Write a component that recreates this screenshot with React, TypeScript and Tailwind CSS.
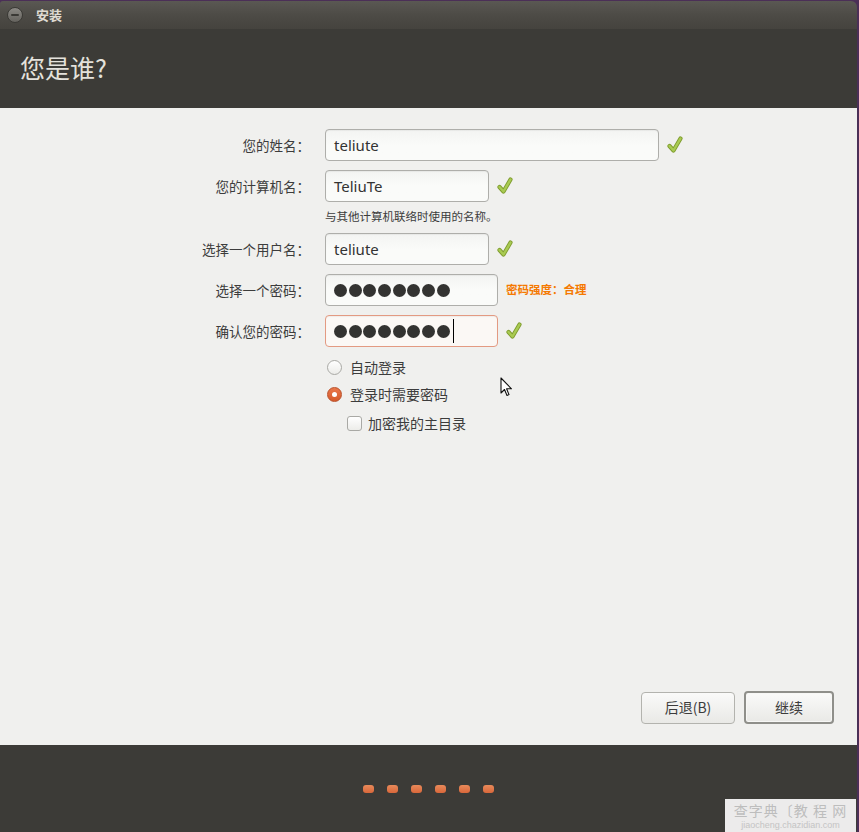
import React from 'react';

const CJK = '"Noto Sans CJK SC", "Noto Sans", sans-serif';

function Check() {
  return (
    <svg width="16" height="18" viewBox="0 0 16 18" className="ml-[8px] shrink-0">
      <path d="M2.5 10 L6.5 14.5 L13.5 2.5" fill="none" stroke="#7f9c2e" strokeWidth="4.2" strokeLinecap="round" strokeLinejoin="round" />
      <path d="M2.5 10 L6.5 14.5 L13.5 2.5" fill="none" stroke="#a9cb52" strokeWidth="2.4" strokeLinecap="round" strokeLinejoin="round" />
    </svg>
  );
}

function Field({ width, children, accent }: { width: string; children: React.ReactNode; accent?: boolean }) {
  return (
    <div
      className={`${width} h-[32px] rounded-[4px] border flex items-center pl-[8px] ${
        accent ? 'border-[#e39a82] bg-[#fbf8f5]' : 'border-[#aeaeaa] bg-gradient-to-b from-[#f3f4f2] via-[#fafbf9] to-[#fafbf9]'
      } shadow-[inset_0_1px_1px_rgba(0,0,0,0.05)]`}
    >
      {children}
    </div>
  );
}

function Row({ label, children, top }: { label: string; children: React.ReactNode; top: string }) {
  return (
    <div className={`flex items-center ${top}`}>
      <div className="w-[310px] text-right text-[13.5px] text-[#3c3c3c]">{label}</div>
      <div className="ml-[15px] flex items-center">{children}</div>
    </div>
  );
}

function Dots({ caret }: { caret?: boolean }) {
  return (
    <div className="flex items-center gap-[1.7px]">
      {Array.from({ length: 8 }).map((_, i) => (
        <span key={i} className="w-[13px] h-[13px] rounded-full bg-[#333331]" />
      ))}
      {caret && <span className="ml-[1px] w-[1px] h-[24px] bg-black" />}
    </div>
  );
}

export default function App() {
  return (
    <div className="w-[859px] h-[832px] bg-[#4b2f57] pt-[1px] pr-[2px] relative overflow-hidden" style={{ fontFamily: CJK }}>
      <div className="w-full h-full flex flex-col">
        {/* title bar */}
        <div className="h-[28px] rounded-tr-[6px] rounded-tl-[3px] bg-gradient-to-b from-[#5a5853] via-[#4d4b46] to-[#45433e] flex items-center">
          <div className="ml-[7px] w-[16px] h-[16px] rounded-full bg-gradient-to-b from-[#8b8984] to-[#65635e] border border-[#3a3935] flex items-center justify-center">
            <span className="w-[8px] h-[2px] bg-[#3a3935] rounded-sm" />
          </div>
          <span className="ml-[13px] text-[13px] font-bold text-[#dfdbd2]">安装</span>
        </div>

        {/* header */}
        <div className="h-[79px] bg-[#3c3b37] flex items-center pl-[20px]">
          <span className="text-[25px] text-[#e4e2dc] leading-none -mt-[2px]">您是谁?</span>
        </div>

        {/* body */}
        <div className="flex-1 bg-[#f0f0ee] flex flex-col pt-[21px] pb-[21px] pr-[23px]">
          <Row label="您的姓名：" top="">
            <Field width="w-[334px]">
              <span className="text-[15px] text-[#333]" style={{ fontFamily: '"Noto Sans", sans-serif' }}>teliute</span>
            </Field>
            <Check />
          </Row>
          <Row label="您的计算机名：" top="mt-[9px]">
            <Field width="w-[164px]">
              <span className="text-[15px] text-[#333]" style={{ fontFamily: '"Noto Sans", sans-serif' }}>TeliuTe</span>
            </Field>
            <Check />
          </Row>
          <div className="ml-[325px] mt-[5px] text-[11.5px] text-[#3c3c3c] leading-[18px]">与其他计算机联络时使用的名称。</div>
          <Row label="选择一个用户名：" top="mt-[8px]">
            <Field width="w-[164px]">
              <span className="text-[15px] text-[#333]" style={{ fontFamily: '"Noto Sans", sans-serif' }}>teliute</span>
            </Field>
            <Check />
          </Row>
          <Row label="选择一个密码：" top="mt-[9px]">
            <Field width="w-[173px]">
              <Dots />
            </Field>
            <span className="ml-[8px] text-[11.5px] font-bold text-[#f57900]">密码强度：合理</span>
          </Row>
          <Row label="确认您的密码：" top="mt-[9px]">
            <Field width="w-[173px]" accent>
              <Dots caret />
            </Field>
            <Check />
          </Row>

          <div className="ml-[327px] mt-[10px] h-[20px] flex items-center">
            <span className="w-[15px] h-[15px] rounded-full border border-[#a9a9a5] bg-gradient-to-b from-[#ffffff] to-[#ecece9]" />
            <span className="ml-[8px] text-[14px] leading-[20px] text-[#3c3c3c]">自动登录</span>
          </div>
          <div className="ml-[327px] mt-[7px] h-[20px] flex items-center">
            <span className="w-[15px] h-[15px] rounded-full bg-gradient-to-b from-[#e9774a] to-[#d65a2a] border border-[#b9502a] flex items-center justify-center">
              <span className="w-[5px] h-[5px] rounded-full bg-white" />
            </span>
            <span className="ml-[8px] text-[14px] leading-[20px] text-[#3c3c3c]">登录时需要密码</span>
          </div>
          <div className="ml-[347px] mt-[9px] h-[20px] flex items-center">
            <span className="w-[15px] h-[15px] rounded-[3px] border border-[#a9a9a5] bg-gradient-to-b from-[#ffffff] to-[#ecece9]" />
            <span className="ml-[6px] text-[14px] leading-[20px] text-[#3c3c3c]">加密我的主目录</span>
          </div>

          <div className="flex-1" />

          <div className="flex justify-end items-center gap-[9px]">
            <button className="w-[94px] h-[32px] rounded-[4px] border border-[#b3b3ae] bg-gradient-to-b from-[#fafaf9] to-[#e9e9e6] text-[14px] text-[#3c3c3c]">
              后退(B)
            </button>
            <button className="w-[90px] h-[33px] rounded-[4px] border-2 border-[#8f8f8a] bg-gradient-to-b from-[#fafaf9] to-[#e9e9e6] text-[14px] text-[#3c3c3c] shadow-[inset_0_0_0_1px_#f7f7f5]">
              继续
            </button>
          </div>
        </div>

        {/* footer */}
        <div className="h-[87px] bg-[#3c3b37] flex justify-center pt-[40px]">
          <div className="flex gap-[13px] h-[8px]">
            {Array.from({ length: 6 }).map((_, i) => (
              <span key={i} className="w-[11px] h-[8px] rounded-[3px] bg-gradient-to-b from-[#e88a5a] to-[#d9673a]" />
            ))}
          </div>
        </div>
      </div>

      {/* mouse pointer */}
      <svg className="absolute left-[500px] top-[377px]" width="14" height="21" viewBox="0 0 14 21">
        <path d="M1 1 L1 16 L4.5 12.5 L7 18.5 L9 17.6 L6.6 11.8 L11.5 11.8 Z" fill="#ffffff" stroke="#111" strokeWidth="1.1" strokeLinejoin="round" />
      </svg>

      {/* watermark */}
      <div className="absolute left-[725px] top-[799px] w-[131px] h-[33px] bg-white/90 flex flex-col items-center justify-center gap-[1px] whitespace-nowrap">
        <span className="text-[14px] leading-[17px] text-[#bdbdbd] tracking-[1px]">查字典〔教 程 网</span>
        <span className="text-[9px] leading-[10px] text-[#c4c4c4]" style={{ fontFamily: '"Liberation Sans", sans-serif' }}>jiaocheng.chazidian.com</span>
      </div>
    </div>
  );
}
